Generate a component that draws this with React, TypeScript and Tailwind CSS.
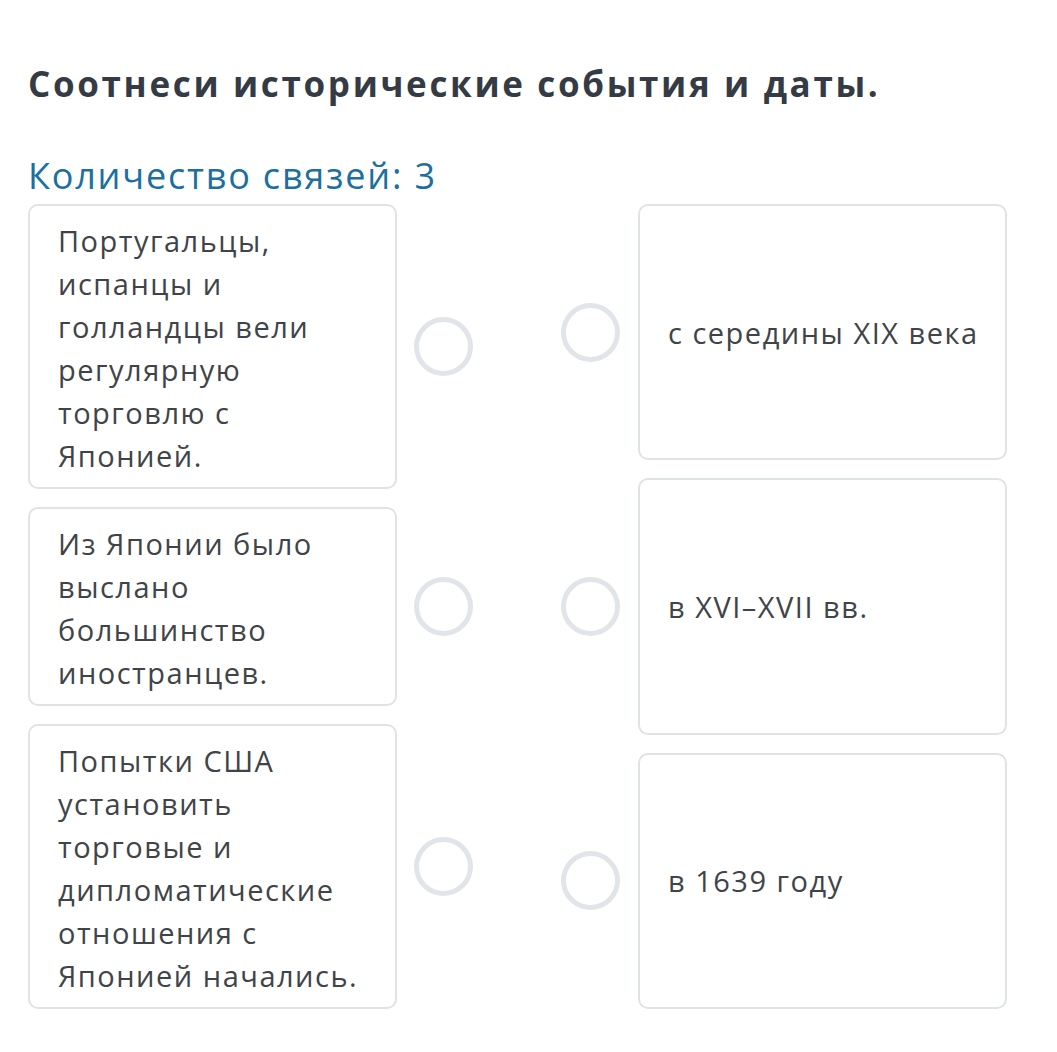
import React from "react";

const events = [
  { id: 1, text: "Португальцы, испанцы и голландцы вели регулярную торговлю с Японией." },
  { id: 2, text: "Из Японии было выслано большинство иностранцев." },
  { id: 3, text: "Попытки США установить торговые и дипломатические отношения с Японией начались." },
];

const dates = [
  { id: 1, text: "с середины XIX века" },
  { id: 2, text: "в XVI–XVII вв." },
  { id: 3, text: "в 1639 году" },
];

const Dot: React.FC = () => (
  <div className="w-[59px] h-[59px] shrink-0 rounded-full border-[5px] border-[#e1e5e9] bg-white" />
);

export default function App() {
  return (
    <div
      className="min-h-screen bg-white pl-[28px] pr-[50px] pt-[60px]"
      style={{ fontFamily: '"Open Sans", "Noto Sans", sans-serif' }}
    >
      <h1 className="text-[35px] leading-[48px] font-bold tracking-[2.65px] text-[#353b45]">
        Соотнеси исторические события и даты.
      </h1>
      <div className="mt-[44px] text-[36px] leading-[48px] tracking-[1.8px] text-[#1c6f9f]">
        Количество связей: 3
      </div>

      <div className="mt-[4px] flex justify-between">
        <div className="flex flex-col gap-[18px]">
          {events.map((e) => (
            <div key={e.id} className="flex items-center gap-[17px]">
              <div className="w-[369px] rounded-[10px] border-2 border-[#e0e3e6] pl-[28px] pr-[26px] pt-[13px] pb-[10px] text-[29px] leading-[43px] tracking-[1.5px] text-[#3f4449]">
                {e.text}
              </div>
              <Dot />
            </div>
          ))}
        </div>

        <div className="flex flex-col gap-[18px]">
          {dates.map((d) => (
            <div key={d.id} className="flex flex-1 items-center gap-[18px]">
              <Dot />
              <div className="flex h-full w-[369px] items-center rounded-[10px] border-2 border-[#e0e3e6] pl-[28px] pr-[8px] text-[29px] leading-[43px] tracking-[1.5px] text-[#3f4449]">
                {d.text}
              </div>
            </div>
          ))}
        </div>
      </div>
    </div>
  );
}
